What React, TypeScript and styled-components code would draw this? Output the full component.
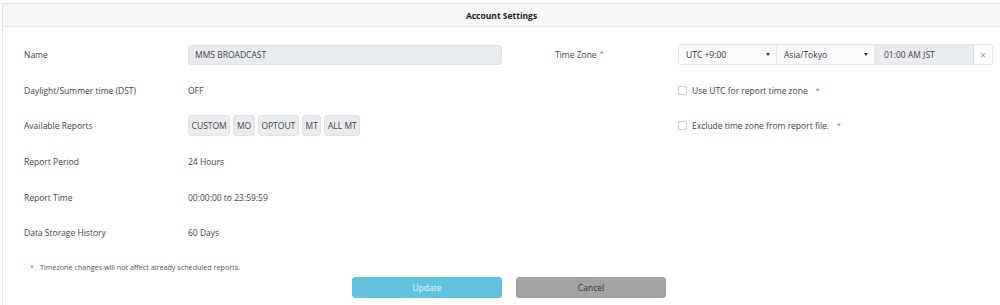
import React from "react"
import styled, { createGlobalStyle } from "styled-components"

const GlobalStyle = createGlobalStyle`
  html, body {
    margin: 0;
    padding: 0;
    background: #ffffff;
    font-family: "Open Sans", "Noto Sans", sans-serif;
    color: #333;
  }
`

const Panel = styled.div`
  margin: 3px 0 0 2px;
  border-left: 1px solid #e3e3e3;
  border-top: 1px solid #e3e3e3;
  height: 302px;
  box-sizing: border-box;
`

const Header = styled.div`
  height: 22px;
  background: #f7f7f7;
  border-bottom: 1px solid #e6e6e6;
  display: flex;
  align-items: center;
  justify-content: center;
  font-size: 8.5px;
  font-weight: 700;
  color: #222;
`

const Body = styled.div`
  display: grid;
  grid-template-columns: 531px 1fr;
  padding: 10px 0 0 21px;
`

const Column = styled.div`
  display: flex;
  flex-direction: column;
`

const Row = styled.div<{ $labelWidth: number }>`
  display: grid;
  grid-template-columns: ${(p) => p.$labelWidth}px 1fr;
  align-items: center;
  height: 35.6px;
  font-size: 8.5px;
`

const Label = styled.div`
  color: #444;
`

const Value = styled.div`
  color: #444;
`

const Required = styled.span`
  color: #d9534f;
  font-size: 7px;
  margin-left: 3px;
  vertical-align: top;
`

const ReadonlyInput = styled.div`
  width: 314px;
  height: 20px;
  box-sizing: border-box;
  background: #e9ecef;
  border: 1px solid #dde1e5;
  border-radius: 3px;
  display: flex;
  align-items: center;
  padding-left: 6px;
  color: #444;
`

const Chips = styled.div`
  display: flex;
  gap: 3px;
`

const Chip = styled.span`
  background: #e9ecef;
  border: 1px solid #dfe2e6;
  border-radius: 3px;
  height: 21px;
  box-sizing: border-box;
  padding: 0 2.6px;
  display: flex;
  align-items: center;
  color: #444;
`

const InputGroup = styled.div`
  display: flex;
  width: 315px;
  height: 21px;
  box-sizing: border-box;
  border: 1px solid #e3e6e9;
  border-radius: 3px;
`

const Select = styled.div`
  width: 98px;
  display: flex;
  align-items: center;
  justify-content: space-between;
  padding: 0 6px 0 7px;
  box-sizing: border-box;
  background: #f9fafb;
  border-right: 1px solid #e5e7ea;
  color: #333;
`

const Caret = styled.span`
  width: 0;
  height: 0;
  border-left: 2.5px solid transparent;
  border-right: 2.5px solid transparent;
  border-top: 3px solid #333;
`

const TimeBox = styled.div`
  width: 98px;
  background: #e9ecef;
  display: flex;
  align-items: center;
  padding-left: 9px;
  box-sizing: border-box;
  color: #444;
`

const ClearButton = styled.div`
  flex: 1;
  display: flex;
  align-items: center;
  justify-content: center;
  border-left: 1px solid #d9dcdf;
  background: #fff;
  color: #999;
  font-size: 10px;
`

const CheckRow = styled.label`
  display: flex;
  align-items: center;
  gap: 5px;
  color: #444;
`

const Box = styled.span`
  width: 9px;
  height: 9px;
  box-sizing: border-box;
  border: 1px solid #c9c9c9;
  border-radius: 1px;
  background: #fff;
`

const Note = styled.div`
  font-size: 7.2px;
  color: #555;
  padding: 11px 0 0 27px;
`

const NoteStar = styled.span`
  color: #d9534f;
  margin-right: 6px;
`

const Buttons = styled.div`
  display: flex;
  gap: 14px;
  padding: 5px 0 0 349px;
`

const Button = styled.button<{ $variant: "primary" | "secondary" }>`
  width: 150px;
  height: 21px;
  border-radius: 3px;
  border: 1px solid ${(p) => (p.$variant === "primary" ? "#5ec0dc" : "#9b9b9b")};
  background: ${(p) => (p.$variant === "primary" ? "#62c3e0" : "#a3a3a3")};
  color: ${(p) => (p.$variant === "primary" ? "#e8f6fb" : "#333")};
  font-family: inherit;
  font-size: 8.5px;
  padding: 0;
`

const reports = ["CUSTOM", "MO", "OPTOUT", "MT", "ALL MT"]

export default function App() {
  return (
    <>
      <GlobalStyle />
      <Panel>
        <Header>Account Settings</Header>
        <Body>
          <Column>
            <Row $labelWidth={164}>
              <Label>Name</Label>
              <ReadonlyInput>MMS BROADCAST</ReadonlyInput>
            </Row>
            <Row $labelWidth={164}>
              <Label>Daylight/Summer time (DST)</Label>
              <Value>OFF</Value>
            </Row>
            <Row $labelWidth={164}>
              <Label>Available Reports</Label>
              <Chips>
                {reports.map((r) => (
                  <Chip key={r}>{r}</Chip>
                ))}
              </Chips>
            </Row>
            <Row $labelWidth={164}>
              <Label>Report Period</Label>
              <Value>24 Hours</Value>
            </Row>
            <Row $labelWidth={164}>
              <Label>Report Time</Label>
              <Value>00:00:00 to 23:59:59</Value>
            </Row>
            <Row $labelWidth={164}>
              <Label>Data Storage History</Label>
              <Value>60 Days</Value>
            </Row>
          </Column>
          <Column>
            <Row $labelWidth={123}>
              <Label>
                Time Zone<Required>*</Required>
              </Label>
              <InputGroup>
                <Select>
                  UTC +9:00 <Caret />
                </Select>
                <Select>
                  Asia/Tokyo <Caret />
                </Select>
                <TimeBox>01:00 AM JST</TimeBox>
                <ClearButton>×</ClearButton>
              </InputGroup>
            </Row>
            <Row $labelWidth={123}>
              <span />
              <CheckRow>
                <Box />
                Use UTC for report time zone <Required>*</Required>
              </CheckRow>
            </Row>
            <Row $labelWidth={123}>
              <span />
              <CheckRow>
                <Box />
                Exclude time zone from report file. <Required>*</Required>
              </CheckRow>
            </Row>
          </Column>
        </Body>
        <Note>
          <NoteStar>*</NoteStar>Timezone changes will not affect already scheduled reports.
        </Note>
        <Buttons>
          <Button $variant="primary">Update</Button>
          <Button $variant="secondary">Cancel</Button>
        </Buttons>
      </Panel>
    </>
  )
}
